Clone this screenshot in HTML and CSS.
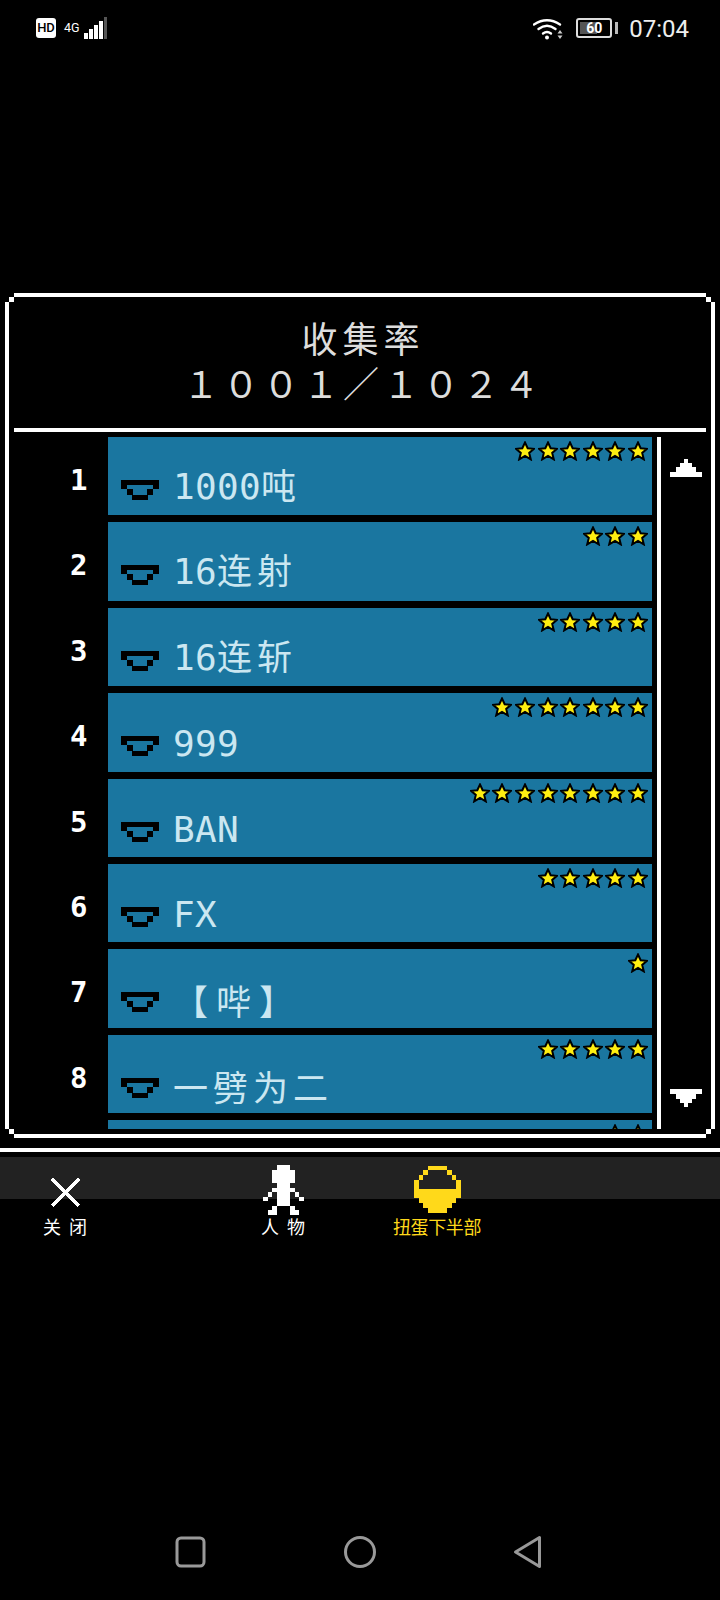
FILE: index.html
```html
<!DOCTYPE html>
<html lang="zh">
<head>
    <meta charset="UTF-8">
    <meta name="viewport" content="width=device-width, initial-scale=1.0">
    <title>收集率</title>
    <link rel="stylesheet" href="styles.css">
</head>
<body>
    <svg class="defs" width="0" height="0">
        <symbol id="star" viewBox="0 0 20 20">
            <polygon points="10,1.500 12.700,7.200 19,7.800 14.200,11.900 15.800,18.400 10,15 4.200,18.400 5.800,11.900 1,7.800 7.300,7.200" fill="#ffee11" stroke="#000" stroke-width="2" stroke-linejoin="miter"/>
        </symbol>
        <symbol id="bowl" viewBox="0 0 38 20">
            <path d="M0 0h38v9h-6v6h-5v5H11v-5H6V9H0zM6 5v4h6v6h14V9h6V5z" fill="#000" fill-rule="evenodd"/>
        </symbol>
    </svg>

    <div class="status">
        <span class="hd">HD</span>
        <span class="net">4G</span>
        <svg class="signal" width="23" height="22" viewBox="0 0 23 22">
            <rect x="0" y="16" width="4" height="6" fill="#fff"/>
            <rect x="5" y="12" width="4" height="10" fill="#fff"/>
            <rect x="10" y="8" width="4" height="14" fill="#fff"/>
            <rect x="15" y="4" width="4" height="18" fill="#fff"/>
            <rect x="20" y="0" width="3" height="22" fill="#555"/>
        </svg>
        <div class="status-right">
            <svg class="wifi" width="31" height="22" viewBox="0 0 31 22">
                <g fill="none" stroke="#fff" stroke-width="2.400" stroke-linecap="round">
                    <path d="M1 6.500Q14-2 27 6.500"/>
                    <path d="M5.500 11Q14 4.500 22.500 11"/>
                    <path d="M10 15.500Q14 12.500 18 15.500"/>
                </g>
                <circle cx="14" cy="19.500" r="2" fill="#fff"/>
                <path d="M27 12l2.500 3.500h-5zM27 21l2.500-3.500h-5z" fill="#ccc"/>
            </svg>
            <div class="battery"><span class="battery-body">60</span><span class="battery-tip"></span></div>
            <span class="time">07:04</span>
        </div>
    </div>

    <div class="frame">
        <div class="head">
            <div class="head-title">收集率</div>
            <div class="head-count">１００１／１０２４</div>
        </div>
        <div class="rule"></div>
        <div class="body">
            <div class="list">
                <div class="item">
                    <div class="rank">1</div>
                    <div class="card">
                        <div class="stars">
                            <svg class="star"><use href="#star"/></svg><svg class="star"><use href="#star"/></svg><svg class="star"><use href="#star"/></svg><svg class="star"><use href="#star"/></svg><svg class="star"><use href="#star"/></svg><svg class="star"><use href="#star"/></svg>
                        </div>
                        <div class="name"><svg class="bowl"><use href="#bowl"/></svg><span><span class="en">1000</span><span class="zh">吨</span></span></div>
                    </div>
                </div>
                <div class="item">
                    <div class="rank">2</div>
                    <div class="card">
                        <div class="stars">
                            <svg class="star"><use href="#star"/></svg><svg class="star"><use href="#star"/></svg><svg class="star"><use href="#star"/></svg>
                        </div>
                        <div class="name"><svg class="bowl"><use href="#bowl"/></svg><span><span class="en">16</span><span class="zh">连射</span></span></div>
                    </div>
                </div>
                <div class="item">
                    <div class="rank">3</div>
                    <div class="card">
                        <div class="stars">
                            <svg class="star"><use href="#star"/></svg><svg class="star"><use href="#star"/></svg><svg class="star"><use href="#star"/></svg><svg class="star"><use href="#star"/></svg><svg class="star"><use href="#star"/></svg>
                        </div>
                        <div class="name"><svg class="bowl"><use href="#bowl"/></svg><span><span class="en">16</span><span class="zh">连斩</span></span></div>
                    </div>
                </div>
                <div class="item">
                    <div class="rank">4</div>
                    <div class="card">
                        <div class="stars">
                            <svg class="star"><use href="#star"/></svg><svg class="star"><use href="#star"/></svg><svg class="star"><use href="#star"/></svg><svg class="star"><use href="#star"/></svg><svg class="star"><use href="#star"/></svg><svg class="star"><use href="#star"/></svg><svg class="star"><use href="#star"/></svg>
                        </div>
                        <div class="name"><svg class="bowl"><use href="#bowl"/></svg><span class="en">999</span></div>
                    </div>
                </div>
                <div class="item">
                    <div class="rank">5</div>
                    <div class="card">
                        <div class="stars">
                            <svg class="star"><use href="#star"/></svg><svg class="star"><use href="#star"/></svg><svg class="star"><use href="#star"/></svg><svg class="star"><use href="#star"/></svg><svg class="star"><use href="#star"/></svg><svg class="star"><use href="#star"/></svg><svg class="star"><use href="#star"/></svg><svg class="star"><use href="#star"/></svg>
                        </div>
                        <div class="name"><svg class="bowl"><use href="#bowl"/></svg><span class="en">BAN</span></div>
                    </div>
                </div>
                <div class="item">
                    <div class="rank">6</div>
                    <div class="card">
                        <div class="stars">
                            <svg class="star"><use href="#star"/></svg><svg class="star"><use href="#star"/></svg><svg class="star"><use href="#star"/></svg><svg class="star"><use href="#star"/></svg><svg class="star"><use href="#star"/></svg>
                        </div>
                        <div class="name"><svg class="bowl"><use href="#bowl"/></svg><span class="en">FX</span></div>
                    </div>
                </div>
                <div class="item">
                    <div class="rank">7</div>
                    <div class="card">
                        <div class="stars">
                            <svg class="star"><use href="#star"/></svg>
                        </div>
                        <div class="name"><svg class="bowl"><use href="#bowl"/></svg><span class="zh zh-wide">【哔】</span></div>
                    </div>
                </div>
                <div class="item">
                    <div class="rank">8</div>
                    <div class="card">
                        <div class="stars">
                            <svg class="star"><use href="#star"/></svg><svg class="star"><use href="#star"/></svg><svg class="star"><use href="#star"/></svg><svg class="star"><use href="#star"/></svg><svg class="star"><use href="#star"/></svg>
                        </div>
                        <div class="name"><svg class="bowl"><use href="#bowl"/></svg><span class="zh">一劈为二</span></div>
                    </div>
                </div>
                <div class="item">
                    <div class="rank"></div>
                    <div class="card">
                        <div class="stars">
                            <svg class="star"><use href="#star"/></svg><svg class="star"><use href="#star"/></svg>
                        </div>
                    </div>
                </div>
            </div>
            <div class="scroll">
                <svg class="arrow" width="32" height="18" viewBox="0 0 32 18"><path d="M14 0h4v4h4v4h4v5h6v5H0v-5h6V8h4V4h4z" fill="#fff"/></svg>
                <svg class="arrow" width="32" height="18" viewBox="0 0 32 18"><path d="M14 18h4v-4h4v-4h4V5h6V0H0v5h6v5h4v4h4z" fill="#fff"/></svg>
            </div>
        </div>
    </div>

    <div class="line"></div>

    <div class="nav">
        <div class="nav-item nav-close">
            <div class="nav-icon">
                <svg class="icon-x" width="31" height="31" viewBox="0 0 31 31" shape-rendering="crispEdges">
                    <path d="M2 2L29 29M29 2L2 29" stroke="#fff" stroke-width="3.500" fill="none"/>
                </svg>
            </div>
            <div class="nav-label nav-label-wide">关闭</div>
        </div>
        <div class="nav-item nav-person">
            <div class="nav-icon">
                <svg width="41" height="50" viewBox="0 0 9 11" shape-rendering="crispEdges" fill="#fff">
                    <path d="M3 0h3v1h1v3H6v5H3V4H2V1h1z"/>
                    <path d="M2 5h1v1H2zM1 6h1v1H1zM0 7h1v1H0zM6 5h1v1H6zM7 6h1v1H7zM8 7h1v1H8z"/>
                    <path d="M2 9h1v2H1v-1h1zM6 9h1v1h1v1H6z"/>
                </svg>
            </div>
            <div class="nav-label nav-label-wide">人物</div>
        </div>
        <div class="nav-item nav-egg">
            <div class="nav-icon">
                <svg width="47" height="48" viewBox="0 0 10 10" shape-rendering="crispEdges" fill="#ffd91a">
                    <path d="M3 0h4v1h1v1h1v1h1v4H9v1H8v1H7v1H3V9H2V8H1V7H0V3h1V2h1V1h1zM3 1v1H2v1H1v2h8V3H8V2H7V1z" fill-rule="evenodd"/>
                </svg>
            </div>
            <div class="nav-label nav-label-on">扭蛋下半部</div>
        </div>
    </div>

    <svg class="sysbar" width="720" height="34" viewBox="0 0 720 34" fill="none" stroke="#999" stroke-width="3">
        <rect x="177" y="3" width="27" height="28" rx="4"/>
        <circle cx="360" cy="17" r="14.500"/>
        <path d="M515.500 17L539.500 2.500V31.500z" stroke-linejoin="round"/>
    </svg>
</body>
</html>
```

FILE: styles.css
```css
* {
    box-sizing: border-box;
    margin: 0;
    padding: 0;
}

body {
    width: 720px;
    height: 1600px;
    background: #000;
    color: #fff;
    font-family: "Noto Sans CJK SC", "Noto Sans", sans-serif;
    display: flex;
    flex-direction: column;
    overflow: hidden;
}

.defs {
    position: absolute;
}

/* status bar */
.status {
    height: 60px;
    padding: 17px 31px 0 36px;
    display: flex;
    align-items: flex-start;
    font-family: Roboto, sans-serif;
}

.hd {
    width: 20px;
    height: 20px;
    margin-top: 1px;
    background: #fff;
    border-radius: 3px;
    color: #000;
    font-size: 13px;
    font-weight: 500;
    line-height: 20px;
    text-align: center;
}

.net {
    margin: 4px 0 0 8px;
    font-size: 12.500px;
    line-height: 14px;
}

.signal {
    margin-left: 4px;
}

.status-right {
    margin-left: auto;
    display: flex;
    align-items: flex-start;
}

.wifi {
    margin-top: 1px;
}

.battery {
    margin: 1px 0 0 12px;
    display: flex;
    align-items: center;
}

.battery-body {
    width: 36px;
    height: 20px;
    border: 2px solid #ddd;
    border-radius: 3px;
    background: linear-gradient(90deg, #555 60%, #000 60%);
    background-clip: content-box;
    padding: 2px;
    font-size: 14px;
    font-weight: 700;
    line-height: 12px;
    text-align: center;
}

.battery-tip {
    width: 3px;
    height: 12px;
    margin-left: 3px;
    background: #bbb;
}

.time {
    margin: -1px 0 0 11px;
    font-size: 24px;
    line-height: 26px;
    color: #eee;
}

/* main panel */
.frame {
    height: 845px;
    margin: 233px 5px 0;
    border: 4px solid #fff;
    padding: 0 5px 5px;
    display: flex;
    flex-direction: column;
    background-image:
        linear-gradient(#fff, #fff), linear-gradient(#fff, #fff),
        linear-gradient(#fff, #fff), linear-gradient(#fff, #fff);
    background-size: 5px 5px;
    background-repeat: no-repeat;
    background-position: left top, right top, left bottom, right bottom;
    clip-path: polygon(
        9px 0, calc(100% - 9px) 0, calc(100% - 9px) 4px, calc(100% - 4px) 4px,
        calc(100% - 4px) 9px, 100% 9px, 100% calc(100% - 9px), calc(100% - 4px) calc(100% - 9px),
        calc(100% - 4px) calc(100% - 4px), calc(100% - 9px) calc(100% - 4px), calc(100% - 9px) 100%, 9px 100%,
        9px calc(100% - 4px), 4px calc(100% - 4px), 4px calc(100% - 9px), 0 calc(100% - 9px),
        0 9px, 4px 9px, 4px 4px, 9px 4px
    );
}

.head {
    height: 131px;
    padding: 18px 0 0 6px;
    text-align: center;
    color: #ddd;
    font-size: 36px;
    line-height: 45px;
    letter-spacing: 5px;
}

.head-count {
    letter-spacing: 4px;
}

.rule {
    height: 4px;
    background: #fff;
    flex-shrink: 0;
}

.body {
    flex: 1;
    min-height: 0;
    margin-top: 5px;
    display: flex;
}

.list {
    width: 638px;
    overflow: hidden;
    display: flex;
    flex-direction: column;
    gap: 7px;
}

.item {
    flex-shrink: 0;
    height: 78.400px;
    display: grid;
    grid-template-columns: 94px 1fr;
    grid-template-rows: 78.400px;
}

.rank {
    padding: 21px 0 0 56px;
    font-family: "DejaVu Sans Mono", monospace;
    font-size: 29px;
    font-weight: 700;
    line-height: 44px;
}

.card {
    min-height: 0;
    overflow: hidden;
    background: #1a76a0;
    display: flex;
    flex-direction: column;
}

.stars {
    height: 24px;
    flex-shrink: 0;
    padding: 4px 4px 0 0;
    display: flex;
    justify-content: flex-end;
    gap: 2.600px;
}

.star {
    width: 20px;
    height: 20px;
}

.name {
    height: 54px;
    flex-shrink: 0;
    padding: 0 0 0 13px;
    display: flex;
    align-items: center;
    gap: 14px;
    color: #cbe7f1;
    line-height: 50px;
    white-space: nowrap;
}

.en {
    font-family: "DejaVu Sans Mono", monospace;
    font-size: 36px;
    letter-spacing: 0.300px;
}

.zh {
    font-size: 35px;
    letter-spacing: 5px;
}

.zh-wide {
    letter-spacing: 8px;
}

.bowl {
    width: 38px;
    height: 20px;
    margin-top: 4px;
    shape-rendering: crispEdges;
    flex-shrink: 0;
}

.scroll {
    width: 45px;
    margin-left: 5px;
    border-left: 4px solid #fff;
    padding: 22px 0 22px 9px;
    display: flex;
    flex-direction: column;
    justify-content: space-between;
}

.arrow {
    shape-rendering: crispEdges;
}

/* bottom tabs */
.line {
    height: 4px;
    margin-top: 10px;
    background: #fff;
}

.nav {
    height: 90px;
    margin-top: 5px;
    padding-top: 8px;
    background: linear-gradient(#222 42px, #000 42px);
    display: flex;
}

.nav-item {
    width: 100px;
}

.nav-close {
    margin-left: 15px;
}

.nav-person {
    margin-left: 118px;
}

.nav-egg {
    margin-left: 54px;
}

.nav-icon {
    height: 50px;
    display: flex;
    justify-content: center;
    align-items: flex-start;
}

.icon-x {
    margin-top: 12px;
}

.nav-label {
    margin-top: -1px;
    font-size: 18px;
    line-height: 24px;
    text-align: center;
    white-space: nowrap;
}

.nav-label-wide {
    letter-spacing: 8px;
    text-indent: 8px;
}

.nav-label-on {
    color: #ffd91a;
    letter-spacing: -0.400px;
}

.sysbar {
    display: block;
    margin-top: auto;
    margin-bottom: 31px;
    flex-shrink: 0;
}
```
